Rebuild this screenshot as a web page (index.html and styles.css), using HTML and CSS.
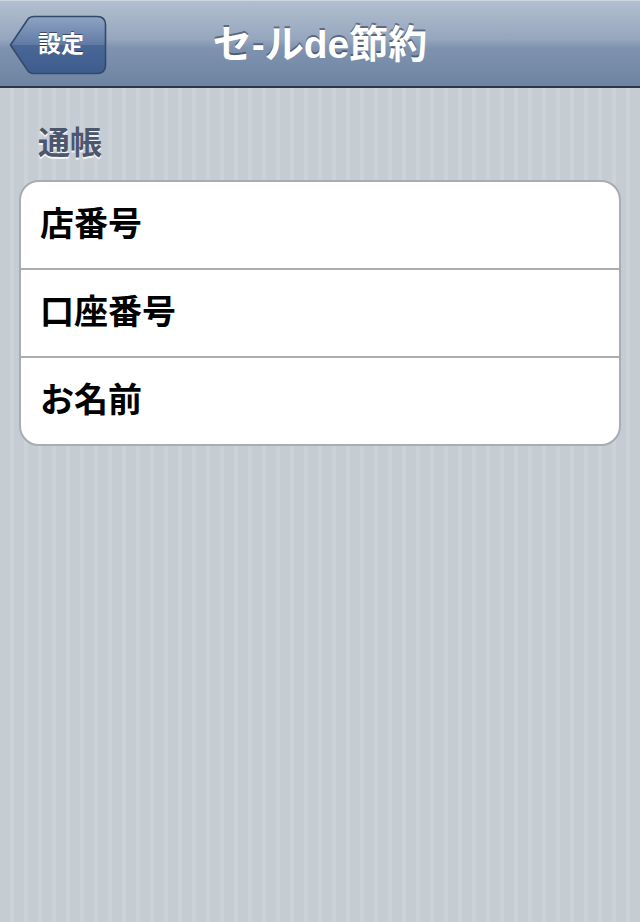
FILE: index.html
```html
<!DOCTYPE html>
<html lang="ja">
<head>
    <meta charset="UTF-8">
    <meta name="viewport" content="width=device-width, initial-scale=1.0">
    <title>セ-ルde節約</title>
    <link rel="stylesheet" href="styles.css">
</head>

<body>
    <div class="navbar">
        <div class="nav_left">
            <div class="back_btn">
                <svg class="back_bg" width="98" height="60" viewBox="0 0 98 60">
                    <defs>
                        <linearGradient id="btnGrad" x1="0" y1="0" x2="0" y2="1">
                            <stop offset="0" stop-color="#8fa4c3"/>
                            <stop offset="0.5" stop-color="#5f7aa4"/>
                            <stop offset="0.5" stop-color="#4a6795"/>
                            <stop offset="1" stop-color="#3d5c8e"/>
                        </linearGradient>
                    </defs>
                    <path d="M1.5 30 L19 4 Q21 1.5 25 1.5 H88 Q96.5 1.5 96.5 10 V50 Q96.5 58.5 88 58.5 H25 Q21 58.5 19 56 Z" fill="url(#btnGrad)" stroke="#34496b" stroke-width="1.6"/>
                </svg>
                <span class="back_text">設定</span>
            </div>
        </div>
        <h1 class="nav_title">セ-ルde節約</h1>
        <div class="nav_right"></div>
    </div>

    <div class="content">
        <h2 class="section_title">通帳</h2>
        <div class="group">
            <div class="cell">店番号</div>
            <div class="cell">口座番号</div>
            <div class="cell">お名前</div>
        </div>
    </div>
</body>
</html>
```

FILE: styles.css
```css
/* 全体 */
body{
    margin: 0;
    font-family: "Liberation Sans", "Noto Sans CJK JP", sans-serif;
    background-color: #c5ccd4;
    background-image: repeating-linear-gradient(90deg, #c5ccd4 0px, #c5ccd4 10px, #cbd2d8 10px, #cbd2d8 14px);
    min-height: 922px;
}

/* ナビゲーションバー */
.navbar{
    display: grid;
    grid-template-columns: 1fr auto 1fr;
    align-items: center;
    background: linear-gradient(#b3bfcf 0%, #95a6bd 45%, #7f93b0 55%, #6d84a2 100%);
    border-top: 1px solid #cdd5df;
    border-bottom: 2px solid #2d3642;
    height: 85px;
}
.nav_left{
    padding-left: 9px;
    padding-top: 2px;
}
.back_btn{
    position: relative;
    width: 98px;
    height: 60px;
}
.back_bg{
    display: block;
}
.back_text{
    position: absolute;
    top: 0;
    left: 18px;
    right: 12px;
    bottom: 5px;
    display: flex;
    align-items: center;
    justify-content: center;
    color: #fff;
    font-size: 23px;
    font-weight: bold;
    text-shadow: 0 -1px 0 rgba(0, 0, 0, 0.45);
}
.nav_title{
    margin: 0 0 5px 0;
    color: #fff;
    font-size: 39px;
    font-weight: bold;
    text-shadow: 0 -2px 0 rgba(40, 50, 70, 0.55);
}

/* 内容 */
.content{
    padding: 34px 19px 0 19px;
}
.section_title{
    margin: 0 0 16px 0;
    padding-left: 19px;
    font-size: 32px;
    line-height: 42px;
    color: #4c566c;
    text-shadow: 0 2px 0 rgba(255, 255, 255, 0.8);
}
.group{
    background-color: #fff;
    border: 2px solid #a9acb0;
    border-radius: 20px;
    overflow: hidden;
}
.cell{
    height: 78px;
    padding-bottom: 8px;
    display: flex;
    align-items: center;
    padding-left: 19px;
    font-size: 34px;
    font-weight: bold;
    color: #000;
}
.cell + .cell{
    border-top: 2px solid #abadb0;
}
```
